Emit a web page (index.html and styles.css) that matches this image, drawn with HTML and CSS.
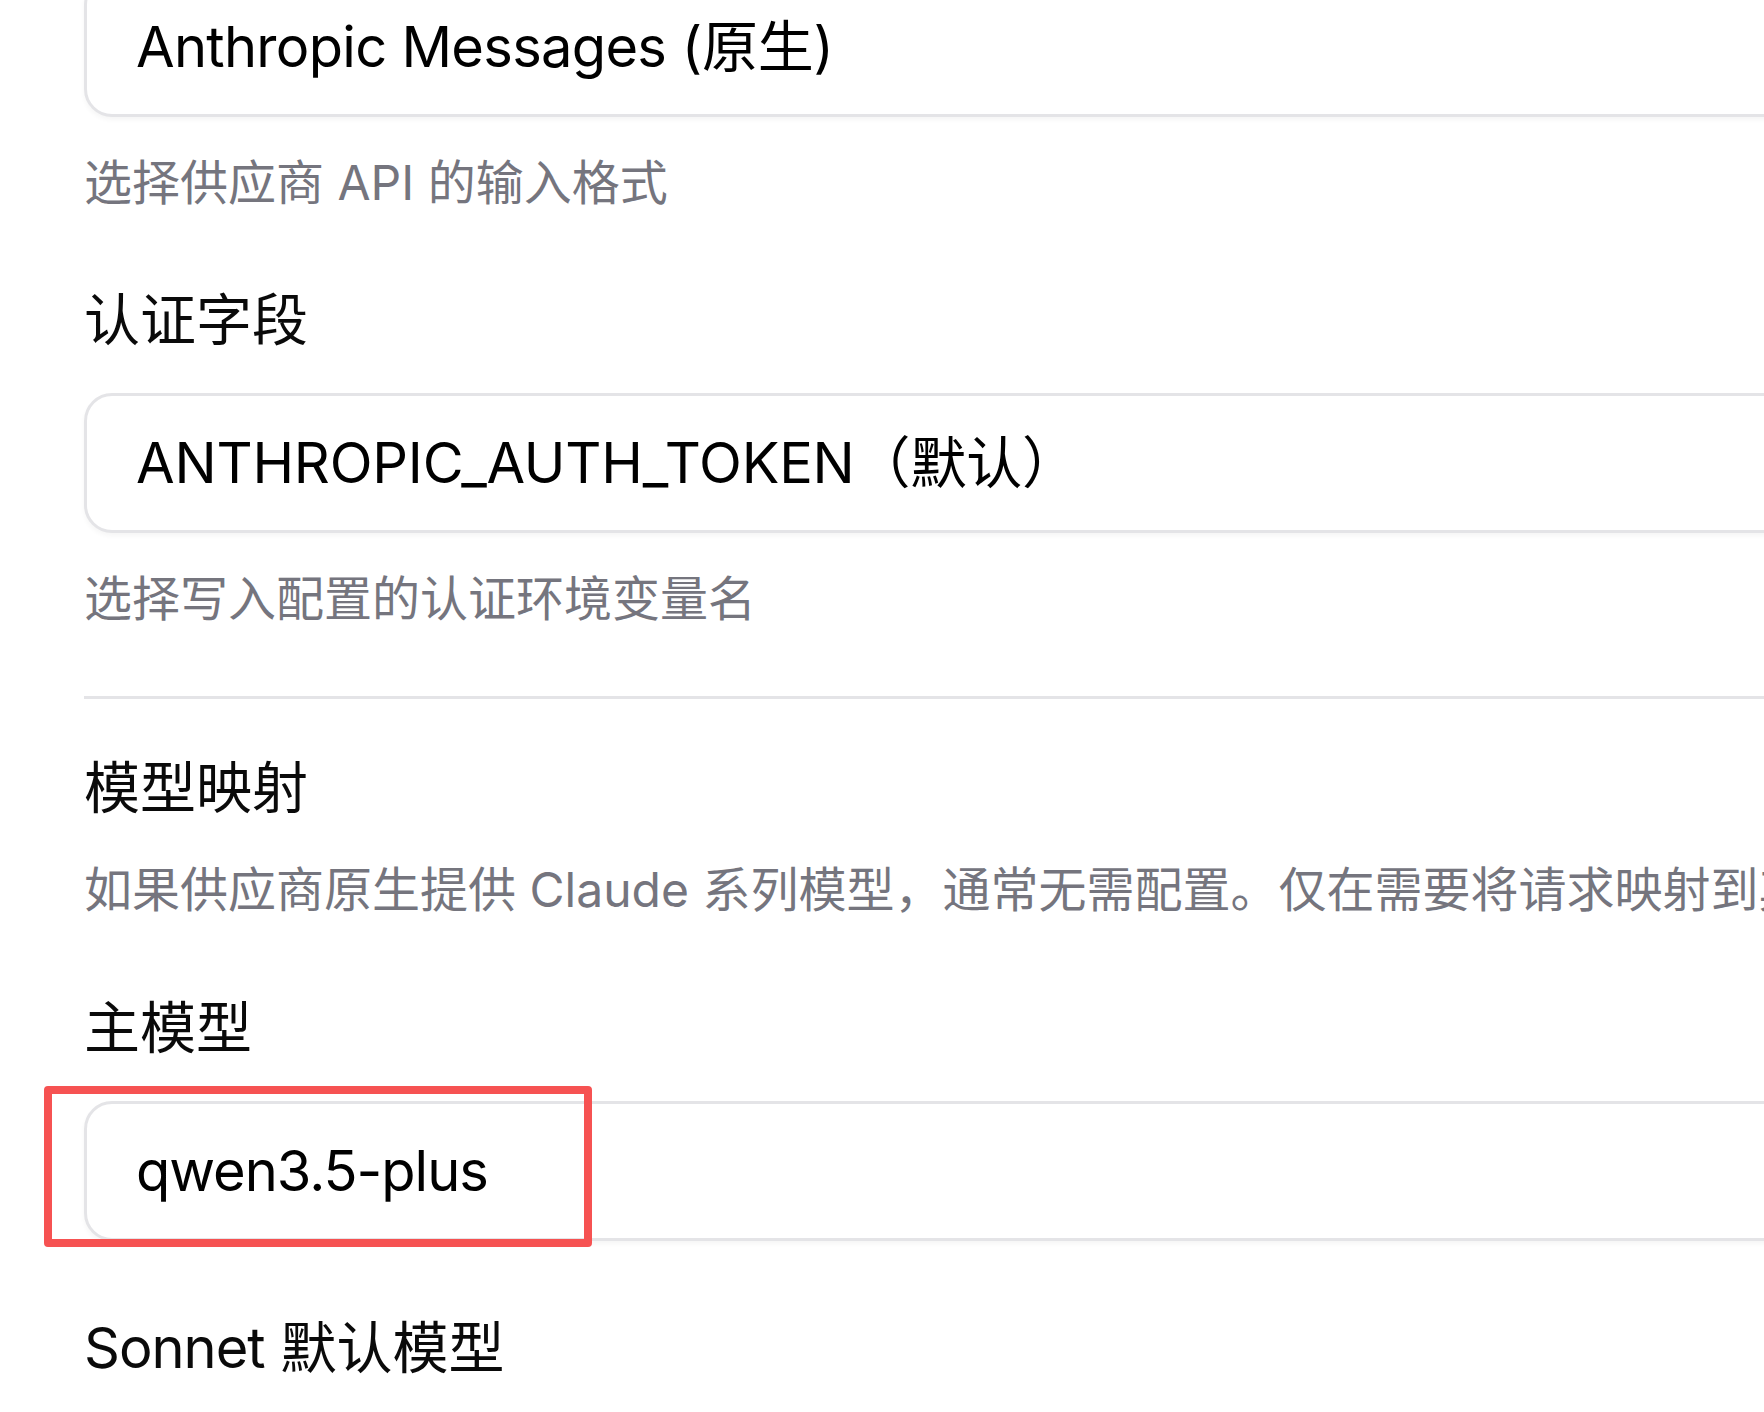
FILE: index.html
```html
<!DOCTYPE html>
<html lang="zh-CN">
<head>
<meta charset="utf-8">
<title>供应商配置</title>
<link rel="stylesheet" href="styles.css">
</head>
<body>
<div class="form">
  <div class="field field-first">
    <div class="select"><span class="latin">Anthropic Messages</span>&nbsp;(原生)</div>
    <p class="hint">选择供应商 API 的输入格式</p>
  </div>

  <div class="field">
    <label class="label">认证字段</label>
    <div class="select">ANTHROPIC_AUTH_TOKEN（默认）</div>
    <p class="hint">选择写入配置的认证环境变量名</p>
  </div>

  <hr class="divider">

  <section class="mapping">
    <h3 class="section-title">模型映射</h3>
    <p class="hint section-desc">如果供应商原生提供 Claude 系列模型，通常无需配置。仅在需要将请求映射到其他模型时才需要填写以下字段。</p>

    <div class="field field-model">
      <label class="label">主模型</label>
      <div class="input-wrap">
        <div class="select"><span class="latin latin-tight">qwen3.5-plus</span></div>
        <div class="highlight"></div>
      </div>
    </div>

    <div class="field field-model">
      <label class="label"><span class="latin latin-tight">Sonnet</span> 默认模型</label>
    </div>
  </section>
</div>
</body>
</html>
```

FILE: styles.css
```css
html, body {
  margin: 0;
  padding: 0;
  background: #ffffff;
  overflow: hidden;
}

body {
  font-family: Inter, "Noto Sans CJK SC", sans-serif;
  color: #0a0a0a;
}

.form {
  width: 2000px;
  padding-left: 84px;
  display: flex;
  flex-direction: column;
}

.field {
  display: flex;
  flex-direction: column;
}

.field-first {
  margin-top: -23px;
}

.field + .field {
  margin-top: 65px;
}

.label {
  display: block;
  height: 80px;
  font-size: 56px;
  line-height: 80px;
  color: #0a0a0a;
  margin: 0 0 33px 0;
  white-space: nowrap;
}

.select {
  box-sizing: border-box;
  height: 140px;
  border: 3px solid #e4e4e7;
  border-radius: 28px;
  background: #ffffff;
  box-shadow: 0 3px 5px rgba(0, 0, 0, 0.04);
  padding: 0 49px;
  display: flex;
  align-items: center;
  font-size: 56px;
  line-height: 1;
  color: #000000;
  white-space: nowrap;
  letter-spacing: -0.2px;
}

.latin {
  letter-spacing: -0.7px;
}

.latin-tight {
  letter-spacing: -1px;
}

.hint {
  margin: 34px 0 0 0;
  height: 64px;
  font-size: 48px;
  line-height: 64px;
  color: #75757e;
  white-space: nowrap;
}

.divider {
  margin: 65px 0 0 0;
  border: 0;
  height: 3px;
  background: #e4e4e7;
}

.mapping {
  display: flex;
  flex-direction: column;
}

.section-title {
  margin: 49px 0 0 0;
  height: 80px;
  font-size: 56px;
  line-height: 80px;
  font-weight: 400;
  color: #0a0a0a;
  white-space: nowrap;
}

.section-desc {
  margin-top: 30px;
}

.mapping .field-model {
  margin-top: 66px;
}

.mapping .field-model + .field-model {
  margin-top: 67px;
}

.input-wrap {
  position: relative;
}

.highlight {
  position: absolute;
  left: -40px;
  top: -15px;
  width: 548px;
  height: 161px;
  box-sizing: border-box;
  border: 8px solid #f65252;
  border-radius: 4px;
  pointer-events: none;
}
```
